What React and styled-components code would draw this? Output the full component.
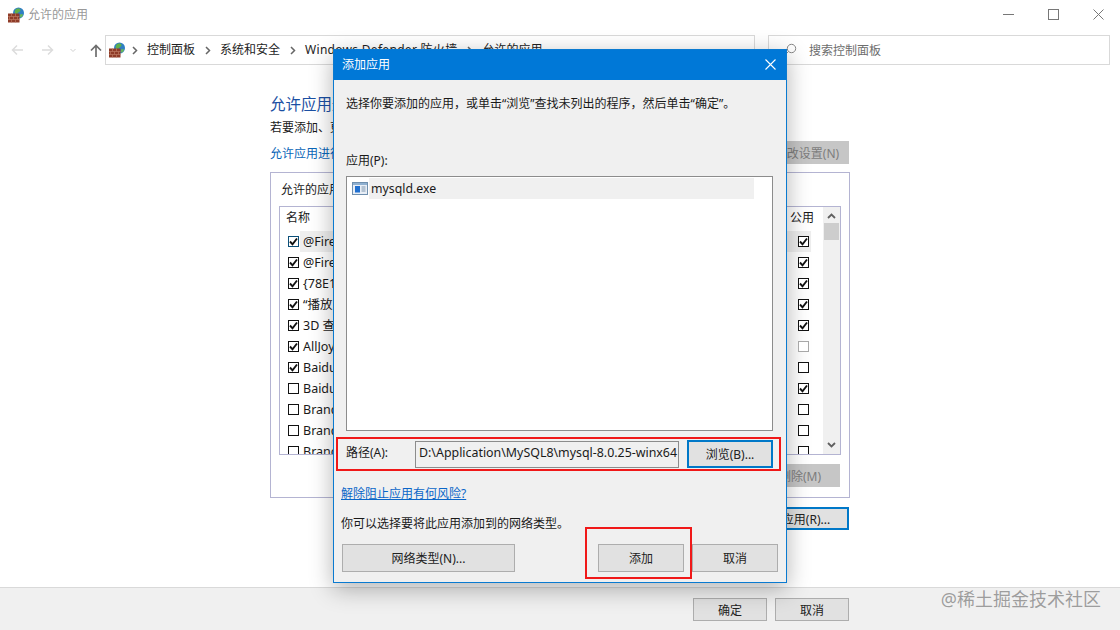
import React from 'react';
import styled, { createGlobalStyle } from 'styled-components';

const GlobalStyle = createGlobalStyle`
  html, body { margin: 0; padding: 0; background: #fff; }
  body {
    font-family: "Noto Sans", "Noto Sans CJK SC", sans-serif;
    font-size: 12px;
    color: #1a1a1a;
    overflow: hidden;
  }
  * { box-sizing: border-box; }
`;

const Page = styled.div`
  position: relative;
  width: 1120px;
  height: 630px;
  display: flex;
  flex-direction: column;
  overflow: hidden;
  background: #fff;
`;

/* background window */
const TitleBar = styled.div`
  height: 30px;
  flex: none;
  display: flex;
  align-items: center;
  padding: 0 16px 1px 8px;
  gap: 4px;
  color: #999;
`;
const TitleText = styled.span`
  flex: 1;
  line-height: 16px;
`;
const WindowButtons = styled.div`
  display: flex;
  gap: 34px;
  align-items: center;
  color: #777;
`;

const NavRow = styled.div`
  height: 30px;
  margin-top: 5px;
  flex: none;
  display: flex;
  padding: 0 10px 0 11px;
`;
const NavArrows = styled.div`
  width: 94px;
  flex: none;
  display: flex;
  align-items: center;
  gap: 17px;
`;
const AddressBox = styled.div`
  width: 650px;
  flex: none;
  border: 1px solid #d9d9d9;
  display: flex;
  align-items: center;
  padding: 0 0 0 3px;
  gap: 9.5px;
  white-space: nowrap;
  overflow: hidden;
`;
const AddressIcon = styled.span`
  display: inline-flex;
  margin-right: -3px;
`;
const Crumb = styled.span`
  color: #222;
  line-height: 16px;
  letter-spacing: ${p => (p.$wide ? '0.3px' : '0')};
`;
const CrumbArrow = styled.span`
  display: inline-flex;
`;
const SearchBox = styled.div`
  margin-left: 13px;
  flex: 1;
  border: 1px solid #d9d9d9;
  display: flex;
  align-items: center;
  padding-left: 14px;
  gap: 12px;
  color: #6d6d6d;
`;

const Main = styled.div`
  flex: 1;
  padding: 28px 0 0 270px;
  width: 850px;
`;
const Heading = styled.h1`
  margin: 0;
  font-size: 15.5px;
  font-weight: 400;
  line-height: 22px;
  color: #1a4fa3;
  white-space: nowrap;
`;
const SubText = styled.p`
  margin: 5px 0 0;
  line-height: 16px;
  white-space: nowrap;
`;
const TopLine = styled.div`
  margin-top: 5px;
  height: 23px;
  display: flex;
  align-items: center;
  justify-content: space-between;
`;
const PlainLink = styled.a`
  color: #0a66b8;
`;
const GrayButton = styled.div`
  height: 23px;
  width: ${p => p.$w}px;
  margin-right: 1px;
  background: #c6c6c6;
  color: #7d7d7d;
  display: flex;
  align-items: center;
  justify-content: center;
  flex: none;
`;
const GroupBox = styled.div`
  margin-top: 8px;
  height: 326px;
  border: 1px solid #b4b4d2;
  padding: 9px 8px 0;
  display: flex;
  flex-direction: column;
`;
const GroupTitle = styled.div`
  padding-left: 2px;
  line-height: 16px;
`;
const TableBox = styled.div`
  margin-top: 8px;
  height: 249px;
  border: 1px solid #b4b4d2;
  display: flex;
  overflow: hidden;
`;
const TableBody = styled.div`
  flex: 1;
  min-width: 0;
  overflow: hidden;
`;
const HeadRow = styled.div`
  height: 24px;
  display: flex;
  justify-content: space-between;
  align-items: center;
  padding: 0 9px 4px 6px;
`;
const Row = styled.div`
  height: 21px;
  display: flex;
  align-items: center;
  padding: 0 14px 0 8px;
  gap: 1px;
`;
const RowName = styled.div`
  flex: 1;
  height: 21px;
  line-height: 21px;
  font-size: 12.5px;
  white-space: nowrap;
  background: ${p => (p.$hover ? '#eeeeee' : 'transparent')};
  margin-right: -14px;
  padding: 0 14px 0 3px;
`;
const Box = styled.span`
  width: 11px;
  height: 11px;
  flex: none;
  border: 1px solid ${p => (p.$focus ? '#0b4f79' : p.$muted ? '#a8a8a8' : '#111')};
  background: #fff;
  display: flex;
  align-items: center;
  justify-content: center;
  position: relative;
  z-index: 1;
`;
const ScrollBar = styled.div`
  width: 17px;
  flex: none;
  background: #f0f0f0;
  display: flex;
  flex-direction: column;
  align-items: center;
  justify-content: space-between;
  position: relative;
  padding: 6px 0 6px;
`;
const Thumb = styled.div`
  position: absolute;
  top: 16px;
  left: 1px;
  width: 15px;
  height: 17px;
  background: #cdcdcd;
`;
const RemoveRow = styled.div`
  margin-top: 9px;
  display: flex;
  justify-content: flex-end;
`;
const OtherAppRow = styled.div`
  margin-top: 9px;
  display: flex;
  justify-content: flex-end;
`;
const FocusButton = styled.div`
  height: ${p => p.$h || 23}px;
  width: ${p => p.$w}px;
  margin-right: ${p => p.$mr || 0}px;
  background: #e1e1e1;
  border: 2px solid #0078c8;
  display: flex;
  align-items: center;
  justify-content: center;
  flex: none;
  color: #222;
`;

const Footer = styled.div`
  height: 43px;
  flex: none;
  background: #f0f0f0;
  border-top: 1px solid #d9d9d9;
  padding: 10px 271px 0 693px;
  display: flex;
  gap: 8px;
`;
const Button = styled.div`
  width: ${p => p.$w}px;
  height: ${p => p.$h || 23}px;
  background: #e1e1e1;
  border: 1px solid #adadad;
  display: flex;
  align-items: center;
  justify-content: center;
  flex: none;
  color: #222;
`;
const Watermark = styled.div`
  position: absolute;
  right: 19px;
  bottom: 19px;
  font-size: 18px;
  line-height: 24px;
  color: rgba(120, 120, 120, 0.7);
  white-space: nowrap;
`;

/* dialog on top */
const Dialog = styled.div`
  position: absolute;
  left: 333px;
  top: 49px;
  width: 454px;
  height: 534px;
  background: #f0f0f0;
  border: 1px solid #0a7ad0;
  box-shadow: 0 6px 22px rgba(0, 0, 0, 0.3);
  display: flex;
  flex-direction: column;
`;
const DialogTitle = styled.div`
  height: 30px;
  flex: none;
  background: #0078d7;
  color: #fff;
  display: flex;
  align-items: center;
  justify-content: space-between;
  padding: 0 10px 2px 8px;
`;
const DialogBody = styled.div`
  flex: 1;
  padding: 15px 13px 10px 12px;
  display: flex;
  flex-direction: column;
`;
const Prompt = styled.div`
  line-height: 18px;
  white-space: nowrap;
`;
const ListLabel = styled.div`
  margin-top: 39px;
  line-height: 18px;
`;
const AppList = styled.div`
  margin-top: 6px;
  height: 255px;
  border: 1px solid #8c8c8c;
  background: #fff;
  padding: 1px 18px 0 5px;
`;
const AppRow = styled.div`
  height: 21px;
  display: flex;
  align-items: center;
`;
const AppName = styled.div`
  flex: 1;
  height: 21px;
  margin-left: 1px;
  padding-left: 2px;
  line-height: 21px;
  font-size: 12.3px;
  background: #f0f0f0;
`;
const PathRow = styled.div`
  margin-top: 9px;
  height: 28px;
  display: flex;
  align-items: center;
`;
const PathLabel = styled.div`
  width: 69px;
  flex: none;
  margin-bottom: 5px;
`;
const PathInput = styled.div`
  width: 264px;
  height: 27px;
  flex: none;
  border: 1px solid #8c8c8c;
  background: #f0f0f0;
  padding-left: 3px;
  font-size: 12.4px;
  line-height: 22px;
  white-space: nowrap;
  overflow: hidden;
`;
const BrowseGap = styled.div`
  width: 8px;
  flex: none;
`;
const HelpLink = styled.a`
  margin: 17px 0 0 -5px;
  line-height: 18px;
  color: #0a66c8;
  text-decoration: underline;
`;
const TypeText = styled.div`
  margin: 12px 0 0 -5px;
  line-height: 18px;
`;
const DialogButtons = styled.div`
  margin: 11px -5px 0 -4px;
  display: flex;
  gap: 8px;
`;
const Spacer = styled.div`
  flex: 1;
`;
const RedBox = styled.div`
  position: absolute;
  left: ${p => p.$x}px;
  top: ${p => p.$y}px;
  width: ${p => p.$w}px;
  height: ${p => p.$h}px;
  border: 2px solid #f01818;
  pointer-events: none;
`;

function FirewallIcon() {
  return (
    <svg width="16" height="16" viewBox="0 0 16 16">
      <circle cx="10.5" cy="6" r="5.5" fill="#2f7fc4" />
      <path d="M7 3.500c1-2 3.500-2.500 5-1.500 1 1 .5 2.500-1 3-1.500.5-1 2-2.500 2S6 5 7 3.500z" fill="#5fb04a" />
      <path d="M12 7.500c1-.5 2.500-.5 3 0-.3 1.500-1.300 2.700-2.700 3.200z" fill="#6cbc52" />
      <rect x="0" y="6.500" width="11.500" height="9" fill="#8f3c28" />
      <path d="M0 9.500h11.500M0 12.500h11.500M3.500 6.500v3M7.500 6.500v3M1.500 9.500v3M5.500 9.500v3M9.500 9.500v3M3.500 12.500v3M7.500 12.500v3" stroke="#bd7a63" strokeWidth=".7" fill="none" />
    </svg>
  );
}

function ExeIcon() {
  return (
    <svg width="16" height="13" viewBox="0 0 16 13">
      <rect x=".5" y=".5" width="15" height="12" fill="#e8eef6" stroke="#6f8fae" />
      <rect x="1" y="1" width="14" height="2" fill="#8fb0d0" />
      <rect x="3" y="4" width="5" height="6.500" fill="#1f6fd0" />
      <path d="M9.500 5h4M9.500 7h4M9.500 9h4" stroke="#7f96ad" />
    </svg>
  );
}

function Check() {
  return (
    <svg width="9" height="9" viewBox="0 0 9 9">
      <path d="M1 4.500l2.500 2.800L8 1.500" fill="none" stroke="#111" strokeWidth="1.900" />
    </svg>
  );
}

function Arrow({ left, color }) {
  return (
    <svg width="13" height="12" viewBox="0 0 13 12" style={{ transform: left ? 'none' : 'scaleX(-1)' }}>
      <path d="M12 6H1.500M6 1.500L1.500 6 6 10.500" fill="none" stroke={color} strokeWidth="1.500" />
    </svg>
  );
}

function Crumbs() {
  return (
    <CrumbArrow>
      <svg width="6" height="9" viewBox="0 0 6 9"><path d="M1 1l3.500 3.500L1 8" fill="none" stroke="#666" strokeWidth="1.500" /></svg>
    </CrumbArrow>
  );
}

function ScrollArrow({ down }) {
  return (
    <svg width="9" height="6" viewBox="0 0 9 6">
      <path d={down ? 'M1 1l3.500 3.500L8 1' : 'M1 5l3.500-3.500L8 5'} fill="none" stroke="#606060" strokeWidth="1.800" />
    </svg>
  );
}

const rows = [
  ['@FirewallAPI.dll,-80201', true, true],
  ['@FirewallAPI.dll,-80206', true, true],
  ['{78E1CD88-49E3-476E-B926-580E596AD309}', true, true],
  ['“播放到设备”功能', true, true],
  ['3D 查看器', true, true],
  ['AllJoyn 路由器', true, false],
  ['Baidu Netdisk', true, false],
  ['Baidu Netdisk', false, true],
  ['Brand', false, false],
  ['Brand', false, false],
  ['Brand', false, false],
];

export default function App() {
  return (
    <Page>
      <GlobalStyle />
      <TitleBar>
        <FirewallIcon />
        <TitleText>允许的应用</TitleText>
        <WindowButtons>
          <svg width="11" height="11" viewBox="0 0 11 11"><path d="M0 5.500h11" stroke="#777" /></svg>
          <svg width="11" height="11" viewBox="0 0 11 11"><rect x=".5" y=".5" width="10" height="10" fill="none" stroke="#777" /></svg>
          <svg width="11" height="11" viewBox="0 0 11 11"><path d="M.5.500l10 10M10.500.500l-10 10" stroke="#777" /></svg>
        </WindowButtons>
      </TitleBar>

      <NavRow>
        <NavArrows>
          <Arrow left color="#dcdcdc" />
          <Arrow color="#dcdcdc" />
          <svg width="6" height="5" viewBox="0 0 6 5" style={{ marginLeft: -1 }}><path d="M.5 1l2.500 2.500L5.500 1" fill="none" stroke="#d0d0d0" /></svg>
          <svg width="12" height="13" viewBox="0 0 12 13" style={{ marginLeft: -3 }}><path d="M6 13V1.500M1 6.500l5-5 5 5" fill="none" stroke="#6e6e6e" strokeWidth="1.700" /></svg>
        </NavArrows>
        <AddressBox>
          <AddressIcon><FirewallIcon /></AddressIcon>
          <Crumbs />
          <Crumb>控制面板</Crumb>
          <Crumbs />
          <Crumb>系统和安全</Crumb>
          <Crumbs />
          <Crumb $wide>Windows Defender 防火墙</Crumb>
          <Crumbs />
          <Crumb>允许的应用</Crumb>
        </AddressBox>
        <SearchBox>
          <svg width="14" height="14" viewBox="0 0 14 14"><circle cx="8.500" cy="5.500" r="4.200" fill="none" stroke="#888" /><path d="M5.500 8.500L1 13" stroke="#888" /></svg>
          搜索控制面板
        </SearchBox>
      </NavRow>

      <Main>
        <Heading>允许应用通过 Windows Defender 防火墙进行通信</Heading>
        <SubText>若要添加、更改或删除所允许的应用和端口，请单击“更改设置”。</SubText>
        <TopLine>
          <PlainLink>允许应用进行通信有哪些风险?</PlainLink>
          <GrayButton $w={84}>更改设置(N)</GrayButton>
        </TopLine>
        <GroupBox>
          <GroupTitle>允许的应用和功能(A):</GroupTitle>
          <TableBox>
            <TableBody>
              <HeadRow>
                <span>名称</span>
                <span>公用</span>
              </HeadRow>
              {rows.map(([name, left, right], i) => (
                <Row key={i}>
                  <Box $focus={i === 0}>{left && <Check />}</Box>
                  <RowName $hover={i === 0}>{name}</RowName>
                  <Box $muted={i === 5}>{right && <Check />}</Box>
                </Row>
              ))}
            </TableBody>
            <ScrollBar>
              <ScrollArrow />
              <Thumb />
              <ScrollArrow down />
            </ScrollBar>
          </TableBox>
          <RemoveRow>
            <GrayButton $w={80}>删除(M)</GrayButton>
          </RemoveRow>
        </GroupBox>
        <OtherAppRow>
          <FocusButton $w={134} $mr={1}>允许其他应用(R)...</FocusButton>
        </OtherAppRow>
      </Main>

      <Footer>
        <Button $w={74}>确定</Button>
        <Button $w={74}>取消</Button>
      </Footer>
      <Watermark>@稀土掘金技术社区</Watermark>

      <Dialog>
        <DialogTitle>
          添加应用
          <svg width="11" height="11" viewBox="0 0 11 11"><path d="M.5.500l10 10M10.500.500l-10 10" stroke="#fff" strokeWidth="1.100" /></svg>
        </DialogTitle>
        <DialogBody>
          <Prompt>选择你要添加的应用，或单击“浏览”查找未列出的程序，然后单击“确定”。</Prompt>
          <ListLabel>应用(P):</ListLabel>
          <AppList>
            <AppRow>
              <ExeIcon />
              <AppName>mysqld.exe</AppName>
            </AppRow>
          </AppList>
          <PathRow>
            <PathLabel>路径(A):</PathLabel>
            <PathInput>D:\Application\MySQL8\mysql-8.0.25-winx64</PathInput>
            <BrowseGap />
            <FocusButton $w={86} $h={28}>浏览(B)...</FocusButton>
          </PathRow>
          <HelpLink>解除阻止应用有何风险?</HelpLink>
          <TypeText>你可以选择要将此应用添加到的网络类型。</TypeText>
          <DialogButtons>
            <Button $w={173} $h={28}>网络类型(N)...</Button>
            <Spacer />
            <Button $w={86} $h={28}>添加</Button>
            <Button $w={86} $h={28}>取消</Button>
          </DialogButtons>
        </DialogBody>
      </Dialog>

      <RedBox $x={336} $y={437} $w={445} $h={34} />
      <RedBox $x={585} $y={527} $w={107} $h={52} />
    </Page>
  );
}
